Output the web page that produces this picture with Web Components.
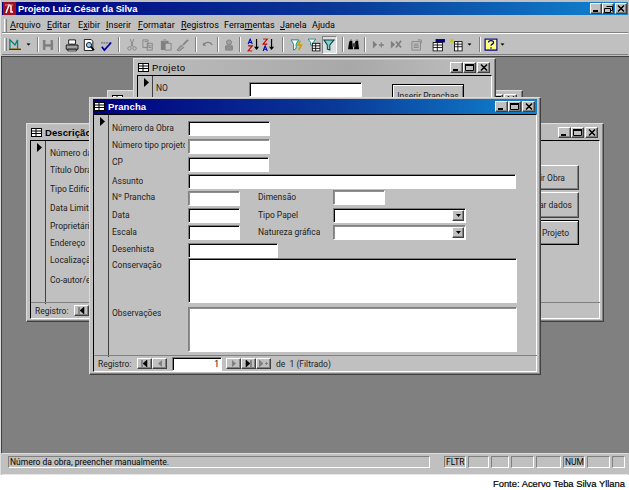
<!DOCTYPE html>
<html><head><meta charset="utf-8">
<style>
html,body{margin:0;padding:0;background:#fff;width:629px;height:490px;overflow:hidden}
body{font:9px Roboto,"Liberation Sans",Arial,sans-serif;color:#000}
</style></head><body>
<access-app>
<span slot="title">Projeto Luiz César da Silva</span>
<mdi-window slot="mdi" caption="" style="left:105px;top:33px;width:416px;height:40px"></mdi-window>
<mdi-window slot="mdi" caption="Projeto" plain style="left:131px;top:1px;width:363px;height:60px">
  <rec-sel h="40"></rec-sel>
  <free-label x="22" y="23">NO</free-label>
  <win-field x="115" y="23" w="113"></win-field>
  <win-button x="258" y="25" w="72" h="23" strong>Inserir Pranchas</win-button>
</mdi-window>
<mdi-window slot="mdi" caption="Descrição" style="left:24px;top:66px;width:578px;height:199px">
  <rec-sel h="163"></rec-sel>
  <free-label x="23" y="23">Número da Obra</free-label>
  <free-label x="23" y="40">Título Obra</free-label>
  <free-label x="23" y="59">Tipo Edifício</free-label>
  <free-label x="23" y="78">Data Limite</free-label>
  <free-label x="23" y="96">Proprietário</free-label>
  <free-label x="23" y="113">Endereço</free-label>
  <free-label x="23" y="130">Localização</free-label>
  <free-label x="23" y="150">Co-autor/e</free-label>
  <win-button x="488" y="41" w="64" h="25" pr="13">Inserir Obra</win-button>
  <win-button x="488" y="68" w="64" h="26" pr="6">Alterar dados</win-button>
  <win-button x="488" y="96" w="64" h="25" pr="9" strong>Projeto</win-button>
  <nav-bar short></nav-bar>
</mdi-window>
<mdi-window slot="mdi" active caption="Prancha" style="left:87px;top:40px;width:452px;height:278px">
  <rec-sel h="242"></rec-sel>
  <free-label x="22" y="24">Número da Obra</free-label>
  <free-label x="22" y="41" w="73">Número tipo projeto</free-label>
  <free-label x="22" y="58">CP</free-label>
  <free-label x="22" y="77">Assunto</free-label>
  <free-label x="22" y="93">Nº Prancha</free-label>
  <free-label x="22" y="111">Data</free-label>
  <free-label x="22" y="128">Escala</free-label>
  <free-label x="22" y="145">Desenhista</free-label>
  <free-label x="22" y="161">Conservação</free-label>
  <free-label x="22" y="209">Observações</free-label>
  <free-label x="168" y="93">Dimensão</free-label>
  <free-label x="168" y="111">Tipo Papel</free-label>
  <free-label x="168" y="128">Natureza gráfica</free-label>
  <win-field x="98" y="23" w="82"></win-field>
  <win-field x="98" y="41" w="82" soft></win-field>
  <win-field x="98" y="59" w="81"></win-field>
  <win-field x="98" y="76" w="328"></win-field>
  <win-field x="98" y="93" w="52" soft></win-field>
  <win-field x="98" y="110" w="52"></win-field>
  <win-field x="98" y="127" w="52"></win-field>
  <win-field x="98" y="145" w="90"></win-field>
  <win-field x="98" y="160" w="329" h="45"></win-field>
  <win-field x="98" y="209" w="329" h="45" soft></win-field>
  <win-field x="243" y="92" w="52" soft></win-field>
  <win-field x="243" y="110" w="133" combo></win-field>
  <win-field x="243" y="127" w="133" combo soft></win-field>
  <nav-bar></nav-bar>
</mdi-window>
<span slot="status">Número da obra, preencher manualmente.</span>
<span slot="source">Fonte: Acervo Teba Silva Yllana</span>
</access-app>
<script>
const def=(n,html,extra)=>customElements.define(n,class extends HTMLElement{
  constructor(){super();this.attachShadow({mode:'open'}).innerHTML=html;}
  connectedCallback(){extra&&extra(this)}
});
const bev='border:1px solid;border-color:#fff #404040 #404040 #fff;box-shadow:inset -1px -1px 0 #808080';
const sunk='border:1px solid;border-color:#808080 #fff #fff #808080;box-shadow:inset 1px 1px 0 #000';
const sunkSoft='border:1px solid;border-color:#808080 #fff #fff #808080;box-shadow:inset 1px 1px 0 #909090';
const ctl=(c,w=13)=>`<span style="display:inline-flex;align-items:center;justify-content:center;width:${w}px;height:11px;box-sizing:border-box;background:#c0c0c0;${bev}">${c}</span>`;
const minI='<svg width="9" height="7"><rect x="1" y="5" width="5" height="2"/></svg>';
const maxI='<svg width="9" height="7"><path d="M0.5 1.500h8v5h-8z" fill="none" stroke="#000"/><path d="M0 1h9" stroke="#000" stroke-width="2"/></svg>';
const resI='<svg width="9" height="8"><path d="M2.500 1.500h6v4h-2M0.500 3.500h6v4h-6z" fill="none" stroke="#000"/></svg>';
const xI='<svg width="8" height="7"><path d="M1 0.500l6 6M7 0.500l-6 6" stroke="#000" stroke-width="1.500"/></svg>';
const ic={
 view:'<svg width="18" height="16"><path d="M2 14h14v-2H2z" fill="#c0a000"/><path d="M3 12V2l6 6 3-6v10" fill="none" stroke="#008080" stroke-width="1.500"/><path d="M2 13h14" stroke="#000"/></svg>',
 save:'<svg width="16" height="16"><path d="M2 2h11l1 1v11H2z" fill="#808080"/><rect x="5" y="2" width="6" height="5" fill="#c0c0c0"/><rect x="5" y="10" width="6" height="4" fill="#c0c0c0"/></svg>',
 print:'<svg width="17" height="16"><path d="M4 2h8v5H4z" fill="#fff" stroke="#000"/><path d="M1 8h14v5H1z" fill="#a0a0a0" stroke="#000"/><path d="M3 13h10v2H3z" fill="#fff" stroke="#000"/></svg>',
 prev:'<svg width="16" height="16"><path d="M2.500 1.500h8l2 2v11h-10z" fill="#fff" stroke="#000"/><circle cx="8" cy="8" r="3" fill="#9cf" stroke="#000"/><path d="M10 10l4 4" stroke="#000" stroke-width="2"/></svg>',
 spell:'<svg width="17" height="16"><path d="M2 5.500h11" stroke="#808080" stroke-dasharray="2 1" stroke-width="2"/><path d="M3 10l3 4 8-9" fill="none" stroke="#0000a0" stroke-width="2"/></svg>',
 cut:'<svg width="14" height="16"><path d="M5 1l3 9M9 1L6 10" stroke="#808080"/><circle cx="4" cy="12" r="2" fill="none" stroke="#808080"/><circle cx="10" cy="12" r="2" fill="none" stroke="#808080"/></svg>',
 copy:'<svg width="16" height="16"><path d="M2 2h6v9H2zM7 6h6v8H7z" fill="#c0c0c0" stroke="#808080"/><path d="M4 4h3M9 9h3M9 11h3" stroke="#808080"/></svg>',
 paste:'<svg width="16" height="16"><path d="M2 3h9v11H2z" fill="#808080"/><path d="M5 1h3v3H5z" fill="#a0a0a0"/><path d="M7 6h7v8H7z" fill="#c0c0c0" stroke="#808080"/></svg>',
 brush:'<svg width="17" height="16"><path d="M2 14l5-6 3 3-5 4z" fill="#a0a0a0" stroke="#808080"/><path d="M9 8l6-6" stroke="#808080" stroke-width="2"/></svg>',
 undo:'<svg width="16" height="16"><path d="M3 7c3-3 8-3 10 1" fill="none" stroke="#808080" stroke-width="1.500"/><path d="M2 5v4h4z" fill="#808080"/></svg>',
 web:'<svg width="16" height="16"><circle cx="8" cy="5" r="3" fill="#a0a0a0" stroke="#808080"/><path d="M4 9h8v5H4z" fill="#909090" stroke="#808080"/></svg>',
 az:'<svg width="16" height="16"><path d="M1 7l2.500-6L6 7M2 5h3" fill="none" stroke="#0000c0" stroke-width="1.300"/><path d="M1 9h5L1 15h5" fill="none" stroke="#c00000" stroke-width="1.300"/><path d="M11 1v11" stroke="#000" stroke-width="1.400"/><path d="M8 10h6l-3 4z"/></svg>',
 za:'<svg width="16" height="16"><path d="M1 1h5L1 7h5" fill="none" stroke="#c00000" stroke-width="1.300"/><path d="M1 15l2.500-6L6 15M2 13h3" fill="none" stroke="#0000c0" stroke-width="1.300"/><path d="M11 1v11" stroke="#000" stroke-width="1.400"/><path d="M8 10h6l-3 4z"/></svg>',
 f1:'<svg width="16" height="16"><path d="M1 2h9L7 7v5l-3 2V7z" fill="#fff" stroke="#008080"/><path d="M12 3l-3 5h4l-3 6" fill="none" stroke="#c8a000" stroke-width="2"/></svg>',
 f2:'<svg width="16" height="16"><path d="M1 1h9L7 5v4L4 8V5z" fill="#fff" stroke="#008080"/><rect x="6" y="6" width="9" height="9" fill="#fff" stroke="#000"/><path d="M6 9h9M6 12h9M10 6v9" stroke="#000"/></svg>',
 f3:'<svg width="16" height="16"><path d="M2 2h12L9 8v6l-3-1V8z" fill="#8cc" stroke="#004040" stroke-width="1.200"/></svg>',
 bin:'<svg width="16" height="16"><path d="M3 3h3v3l1 7H1l1-7zM10 3h3v3l1 7H8l1-7z" fill="#000"/><path d="M6 6h4v4H6z" fill="#404040"/><path d="M4 2h1M11 2h1" stroke="#800000"/></svg>',
 rnew:'<svg width="16" height="16"><path d="M2 3v9l5-4.500z" fill="#808080"/><path d="M9 8h6M12 5v6" stroke="#808080" stroke-width="1.500"/></svg>',
 rdel:'<svg width="16" height="16"><path d="M2 3v9l5-4.500z" fill="#808080"/><path d="M8 4l6 7M14 3l-6 8" stroke="#808080" stroke-width="2"/></svg>',
 prop:'<svg width="16" height="16"><path d="M2 4h10v10H2z" fill="#c0c0c0" stroke="#808080"/><path d="M4 7h6M4 9h6M4 11h6M9 2h4v4" stroke="#808080" fill="none"/></svg>',
 dbw:'<svg width="16" height="16"><rect x="4" y="1" width="11" height="4" fill="#000080"/><rect x="1" y="5" width="11" height="10" fill="#fff" stroke="#000"/><path d="M1 8h11M1 11h11M6 5v10" stroke="#000"/></svg>',
 newo:'<svg width="18" height="16"><path d="M1 1l4 4M5 1L1 5" stroke="#c8c800" stroke-width="1.500"/><rect x="6" y="4" width="9" height="11" fill="#fff" stroke="#000"/><path d="M6 7h9M6 10h9M10 4v11" stroke="#000"/></svg>',
 help:'<svg width="16" height="16"><rect x="1" y="1" width="14" height="13" fill="#ffff80" stroke="#000080" stroke-width="1.500"/><path d="M5 5c0-3 6-3 6 0 0 2-3 2-3 4M8 10.500v2" fill="none" stroke="#000080" stroke-width="1.500"/></svg>'
};
const arrow='<svg width="5" height="3"><path d="M0 0h5L2.500 3z"/></svg>';
const tl=[['view',15],['a',28],['s',37],['save',47],['s',58],['print',70],['prev',87],['spell',107],['s',119],['cut',128],['copy',147],['paste',165],['brush',183],['s',195],['undo',207],['s',217],['web',228],['s',239],['az',251],['za',270],['s',282],['f1',295],['f2',313],['f3',329],['s',342],['bin',353],['s',364],['rnew',376],['rdel',393],['prop',416],['dbw',439],['newo',457],['a',469],['s',478],['help',489],['a',502]];
let edge=7;
const tools=tl.map(([k,c],i)=>{
  const n=i<tl.length-1?(c+tl[i+1][1])/2:c+5;
  const w=n-edge;edge=n;
  const inner=k==='a'?arrow:k==='s'?'<i class="sep"></i>':ic[k];
  return `<b class="tb${k==='f3'?' on':''}" style="width:${w}px">${inner}</b>`;
}).join('');
const menu=[['<u>A</u>rquivo',37],['<u>E</u>ditar',31],['E<u>x</u>ibir',28],['<u>I</u>nserir',32],['<u>F</u>ormatar',43],['<u>R</u>egistros',43],['Ferra<u>m</u>entas',56],['<u>J</u>anela',32],['A<u>j</u>uda',30]].map(([t,w])=>`<span style="width:${w}px">${t}</span>`).join('');
def('access-app',`<style>
:host{display:flex;flex-direction:column;width:629px;height:490px;background:#fff;font:9px Roboto,"Liberation Sans",Arial,sans-serif}
.frame{display:flex;flex-direction:column;height:475px;background:#c0c0c0;padding:2px 1px 0 1px;box-sizing:border-box;border-left:1px solid #dcdcdc;flex:none}
.title{height:13px;flex:none;display:flex;align-items:center;gap:2px;padding:0 1px 0 1px;margin-bottom:1px;background:linear-gradient(90deg,#000080 0,#0a3a98 55%,#1084d0 100%);color:#fff;font:700 9.300px "Liberation Sans",Arial,sans-serif}
.title .sp{flex:1}
.ctls{display:flex}
.ctls span+span+span{margin-left:1px}
.menu{height:17px;flex:none;display:flex;align-items:center;border-bottom:1px solid #808080;box-sizing:border-box;padding-top:2px;box-shadow:0 1px 0 #fff;font-size:9px}
.menu::before,.tools::before{content:"";flex:none;width:1px;height:13px;border-left:1px solid #fff;border-right:1px solid #808080;margin:0 1px 0 2px}
.menu::before{margin-right:3px}
.menu span{flex:none;white-space:nowrap}
.tools{height:21px;flex:none;margin-top:1px;display:flex;align-items:center;border-bottom:1px solid #808080;box-sizing:border-box;padding-top:1px;margin-bottom:1px}
.tb{display:inline-flex;flex:none;height:18px;align-items:center;justify-content:center;font-weight:400;box-sizing:border-box}
.tb svg{transform:scale(.85);flex:none}
.tb.on{background:#dedede;border:1px solid;border-color:#808080 #fff #fff #808080}
.sep{width:2px;height:15px;border-left:1px solid #808080;border-right:1px solid #fff;box-sizing:border-box}
.mdi{flex:none;height:397px;background:#808080;position:relative;overflow:hidden;border-top:1px solid #404040;border-left:1px solid #404040;box-sizing:border-box;margin:0 -1px 0 -1px}
.status{flex:1;display:flex;gap:2px;align-items:center;padding:0 3px 4px 6px;box-sizing:border-box;border-top:1px solid #dcdcdc;border-bottom:1px solid #e8e8e8}
.cell{flex:none;height:12px;box-sizing:border-box;border:1px solid;border-color:#808080 #fff #fff #808080;display:flex;align-items:center;font-size:8.500px;padding-left:1px;white-space:nowrap}
.msg{width:422px;margin-right:12px}
.source{flex:1;display:flex;align-items:center;justify-content:flex-end;padding:1px 4px 0 0;font:9.400px "Liberation Sans",Arial,sans-serif;color:#000;-webkit-text-stroke:.2px #000}
</style>
<div class="frame">
 <div class="title"><svg width="13" height="13"><rect width="13" height="13" fill="#a01020"/><path d="M3 11l3-8 2 1v6h2" fill="none" stroke="#fff" stroke-width="1.500"/><path d="M2 3h8" stroke="#e0a0a0"/></svg><slot name="title"></slot><i class="sp"></i><span class="ctls">${ctl(minI,12)}${ctl(resI,12)}${ctl(xI,12)}</span></div>
 <div class="menu">${menu}</div>
 <div class="tools">${tools}</div>
 <div class="mdi"><slot name="mdi"></slot></div>
 <div class="status"><span class="cell msg"><slot name="status"></slot></span><span class="cell" style="width:22px">FLTR</span><span class="cell" style="width:21px"></span><span class="cell" style="width:18px"></span><span class="cell" style="width:23px"></span><span class="cell" style="width:25px"></span><span class="cell" style="width:22px">NUM</span><span class="cell" style="width:23px"></span><span class="cell" style="width:13px"></span></div>
</div>
<div class="source"><slot name="source"></slot></div>`);
def('mdi-window','',el=>{
 const a=el.hasAttribute('active'),cap=el.getAttribute('caption'),pl=el.hasAttribute('plain');
 el.shadowRoot.innerHTML=`<style>
 :host{position:absolute;display:flex;flex-direction:column;box-sizing:border-box;background:#c0c0c0;border:1px solid;border-color:#dcdcdc #404040 #404040 #dcdcdc;box-shadow:inset -1px -1px 0 #808080;padding:1px 3px 2px}
 .t{height:15px;flex:none;display:flex;align-items:center;gap:3px;padding:0 2px 0 1px;font:${pl?400:700} 9.500px "Liberation Sans",Arial,sans-serif;letter-spacing:${pl?'.5px':'.1px'};color:${a?'#fff':'#000'};background:${a?'linear-gradient(90deg,#000080,#0a3a98 55%,#1084d0)':'linear-gradient(90deg,#bcbcbc,#a8a8a8 60%,#c0c0c0)'}}
 .sp{flex:1}.c{display:flex}.c span+span+span{margin-left:1px}
 .b{flex:1;border:1px solid;border-color:#000 #fff #fff #000}
 svg.i{flex:none}
 </style><div class="t"><svg class="i" width="11" height="9"><rect x=".5" y=".5" width="10" height="8" fill="#fff" stroke="#000"/><path d="M1 3h9M1 5.500h9M5 1v7" stroke="#000"/></svg><span>${cap}</span><i class="sp"></i><span class="c">${ctl(minI)}${ctl(maxI)}${ctl(xI)}</span></div><div class="b"><slot></slot></div>`;
});
def('rec-sel','',el=>{
 const h=el.getAttribute('h');
 el.shadowRoot.innerHTML=`<style>:host{position:absolute;left:4px;top:17px;display:block;width:14px;height:${h}px;border-right:1px solid #404040}
 svg{display:block;margin:2px 0 0 6px}</style><svg width="5" height="9"><path d="M0 0l5 4.500-5 4.500z"/></svg>`;
});
def('free-label','',el=>{
 const w=el.getAttribute('w');
 el.shadowRoot.innerHTML=`<style>:host{position:absolute;left:${el.getAttribute('x')}px;top:${el.getAttribute('y')}px;display:block;white-space:nowrap;overflow:hidden;font:8.500px/13px Roboto,"Liberation Sans",Arial,sans-serif;color:#222;${w?`width:${w}px`:''}}</style><slot></slot>`;
});
def('win-field','',el=>{
 const h=el.getAttribute('h')||15,c=el.hasAttribute('combo'),s=el.hasAttribute('soft');
 el.shadowRoot.innerHTML=`<style>:host{position:absolute;left:${el.getAttribute('x')}px;top:${el.getAttribute('y')}px;width:${el.getAttribute('w')}px;height:${h}px;display:block;box-sizing:border-box;background:#fff;${s?sunkSoft:sunk}}
 .a{position:absolute;right:1px;top:1px;width:12px;height:11px;background:#c0c0c0;box-sizing:border-box;display:flex;align-items:center;justify-content:center;${bev}}</style>${c?'<span class="a"><svg width="5" height="3"><path d="M0 0h5L2.500 3z"/></svg></span>':''}`;
});
def('win-button','',el=>{
 const s=el.hasAttribute('strong'),pr=el.getAttribute('pr');
 el.shadowRoot.innerHTML=`<style>:host{position:absolute;left:${el.getAttribute('x')}px;top:${el.getAttribute('y')}px;width:${el.getAttribute('w')}px;height:${el.getAttribute('h')}px;display:flex;align-items:center;justify-content:${pr?'flex-end':'center'};padding-right:${pr||0}px;box-sizing:border-box;white-space:nowrap;font:8.500px Roboto,"Liberation Sans",Arial,sans-serif;color:#222;background:#c0c0c0;${s?'border:1px solid #000;box-shadow:inset 1px 1px 0 #fff,inset -1px -1px 0 #808080':bev}}</style><slot></slot>`;
});
const nb=(d)=>`<span class="n">${d}</span>`;
const gl={f:'<svg width="7" height="7"><path d="M1 0v7M6 0v7L2 3.500z" stroke="#000" stroke-width=".6"/></svg>',p:'<svg width="4" height="7" fill="#808080"><path d="M4 0v7L0 3.500z"/></svg>',n:'<svg width="4" height="7" fill="#808080"><path d="M0 0v7l4-3.500z"/></svg>',l:'<svg width="7" height="7"><path d="M6 0v7M1 0v7l4-3.500z" stroke="#000" stroke-width=".6"/></svg>',w:'<svg width="9" height="7" fill="#808080"><path d="M0 0v7l4-3.500zM6 3.500h3M7.500 2v3" stroke="#808080"/></svg>'};
def('nav-bar','',el=>{
 const short=el.hasAttribute('short');
 el.shadowRoot.innerHTML=`<style>:host{position:absolute;left:4px;right:3px;bottom:3px;height:16px;display:flex;align-items:center;padding-left:4px;font:8.500px Roboto,"Liberation Sans",Arial,sans-serif;color:#222;box-sizing:border-box;border-top:1px solid #808080}
 .n{width:15px;height:11px;flex:none;box-sizing:border-box;display:inline-flex;align-items:center;justify-content:center;background:#c0c0c0;${bev}}
 .l{width:39px;flex:none}
 .f{width:50px;height:14px;flex:none;box-sizing:border-box;background:#fff;${sunk};margin:0 4px 0 5px;text-align:right;line-height:12px;padding-right:2px;color:#000}
 .f span{opacity:.99}
 .d{margin-left:5px;white-space:nowrap}</style>
 <span class="l">Registro:</span>${nb(gl.f)}${short?'':`${nb(gl.p)}<span class="f"><span>1</span></span>${nb(gl.n)}${nb(gl.l)}${nb(gl.w)}<span class="d">de&nbsp;&nbsp;1 (Filtrado)</span>`}`;
});
</script></body></html>
